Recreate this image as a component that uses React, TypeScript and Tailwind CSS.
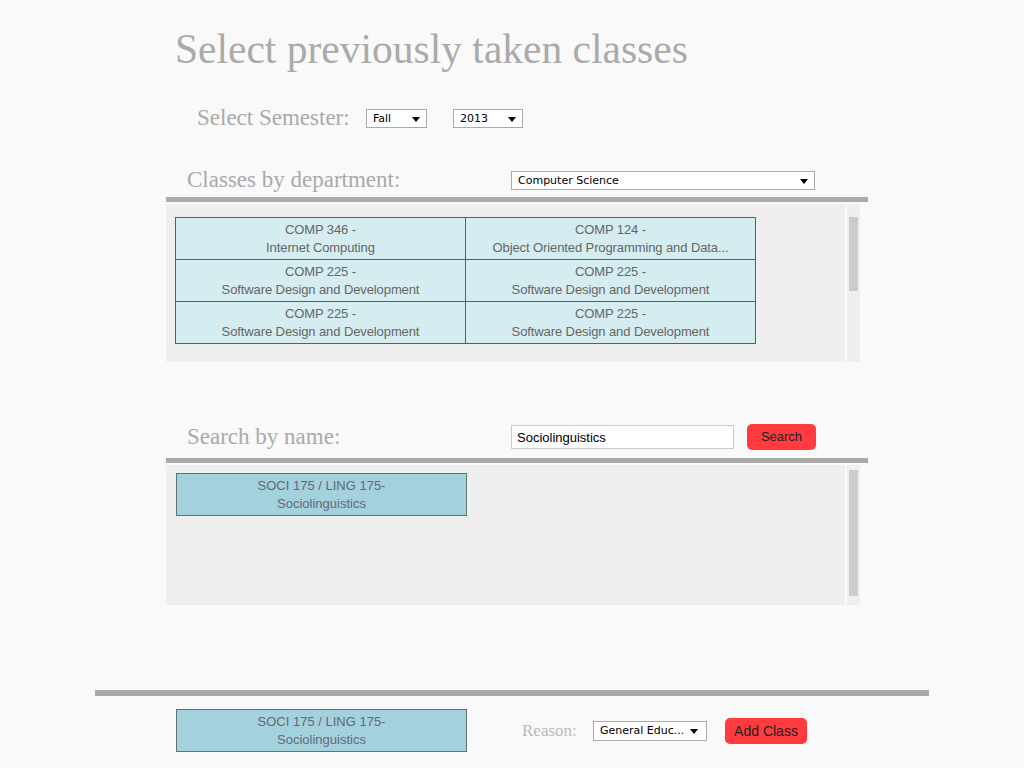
import { useState } from "react";

const serif = { fontFamily: '"Liberation Serif", "DejaVu Serif", serif' };
const sans = { fontFamily: '"Liberation Sans", Arial, sans-serif' };
const verdana = { fontFamily: '"DejaVu Sans", Verdana, sans-serif' };

const classes = [
  { code: "COMP 346 -", name: "Internet Computing" },
  { code: "COMP 124 -", name: "Object Oriented Programming and Data..." },
  { code: "COMP 225 -", name: "Software Design and Development" },
  { code: "COMP 225 -", name: "Software Design and Development" },
  { code: "COMP 225 -", name: "Software Design and Development" },
  { code: "COMP 225 -", name: "Software Design and Development" },
];

const FakeSelect = ({ value, className }: { value: string; className: string }) => {
  return (
    <div
      className={"flex items-center justify-between border border-[#aaa] bg-white pl-[6px] pr-[6px] pt-[1px] text-[11px] text-black " + className}
      style={verdana}>
      <span className="whitespace-nowrap">{value}</span>
      <svg width="8" height="5" viewBox="0 0 8 5" className="shrink-0">
        <path d="M0 0 L8 0 L4 5 Z" fill="#000" />
      </svg>
    </div>
  );
}

const Scrollbar = ({ thumbTop, thumbHeight }: { thumbTop: string; thumbHeight: string }) => (
  <div className="w-[13px] bg-[#efefef] flex justify-center">
    <div className={"w-[9px] bg-[#cccccc] " + thumbTop + " " + thumbHeight} />
  </div>
);

const Card = ({ top, bottom }: { top: string; bottom: string }) => (
  <div
    className="w-[291px] h-[43px] bg-[#a3d2de] border border-[#5f7377] flex flex-col items-center pt-[3px] text-[13px] leading-[18px] text-[#667]"
    style={sans}>
    <span>{top}</span>
    <span>{bottom}</span>
  </div>
);

const App = () => {
  const [query, setQuery] = useState<string>("Sociolinguistics");

  return (
    <div className="min-h-screen w-full bg-[#f9f9f9]">
      <div className="w-[834px] ml-[95px] flex flex-col">
        <h1
          className="pl-[80px] pt-[24px] text-[41.5px] leading-[50px] text-[#aaa] whitespace-nowrap"
          style={serif}>
          Select previously taken classes
        </h1>

        <div className="flex items-center pl-[102px] mt-[35px] h-[19px]">
          <span className="text-[23px] text-[#aaa] w-[169px]" style={serif}>Select Semester:</span>
          <FakeSelect value="Fall" className="w-[61px] h-[19px]" />
          <FakeSelect value="2013" className="w-[70px] h-[19px] ml-[26px]" />
        </div>

        {/* classes by department */}
        <div className="ml-[71px] w-[702px] mt-[43px]">
          <div className="flex items-center h-[19px]">
            <span className="pl-[21px] w-[345px] text-[23px] text-[#aaa]" style={serif}>Classes by department:</span>
            <FakeSelect value="Computer Science" className="w-[304px] h-[19px]" />
          </div>
          <div className="h-[5px] bg-[#aaaaaa] mt-[7px]" />
          <div className="flex gap-[2px] mt-[2px] h-[158px]">
            <div className="w-[679px] bg-[#efefef] pl-[9px] pt-[13px]">
              <div className="grid grid-cols-[290px_290px] w-[581px] border-l border-t border-[#4f6169]">
                {classes.map((c, i) => (
                  <div
                    key={i}
                    className="h-[42px] bg-[#d5ecf0] border-r border-b border-[#4f6169] flex flex-col items-center pt-[3px] text-[13px] leading-[18px] text-[#666] tracking-[-0.1px]"
                    style={sans}>
                    <span>{c.code}</span>
                    <span className="whitespace-nowrap">{c.name}</span>
                  </div>
                ))}
              </div>
            </div>
            <Scrollbar thumbTop="mt-[13px]" thumbHeight="h-[74px]" />
          </div>
        </div>

        {/* search by name */}
        <div className="ml-[71px] w-[702px] mt-[62px]">
          <div className="flex items-center h-[26px]">
            <span className="pl-[21px] w-[345px] text-[23px] text-[#aaa]" style={serif}>Search by name:</span>
            <input
              value={query}
              onChange={(e) => setQuery(e.target.value)}
              className="w-[223px] h-[24px] border border-[#ccc] bg-white px-[5px] text-[13px] text-black outline-none"
              style={sans} />
            <button
              className="ml-[13px] w-[69px] h-[26px] rounded-[5px] bg-[#ff3b40] text-[13px] text-[#222]"
              style={sans}>
              Search
            </button>
          </div>
          <div className="h-[5px] bg-[#aaaaaa] mt-[8px]" />
          <div className="flex gap-[2px] mt-[2px] h-[140px]">
            <div className="w-[679px] bg-[#efefef] pl-[10px] pt-[8px]">
              <Card top="SOCI 175 / LING 175-" bottom="Sociolinguistics" />
            </div>
            <Scrollbar thumbTop="mt-[5px]" thumbHeight="h-[126px]" />
          </div>
        </div>

        {/* bottom */}
        <div className="h-[6px] bg-[#aaaaaa] mt-[85px]" />
        <div className="flex items-center mt-[13px] pl-[81px]">
          <Card top="SOCI 175 / LING 175-" bottom="Sociolinguistics" />
          <span className="ml-[55px] text-[17px] text-[#bbb] w-[71px]" style={serif}>Reason:</span>
          <FakeSelect value="General Educ..." className="w-[114px] h-[20px] !pr-[8px]" />
          <button
            className="ml-[18px] w-[82px] h-[26px] rounded-[5px] bg-[#ff3b40] text-[14px] text-[#222] pt-[1px]"
            style={sans}>
            Add Class
          </button>
        </div>
      </div>
    </div>
  );
}

export default App;
